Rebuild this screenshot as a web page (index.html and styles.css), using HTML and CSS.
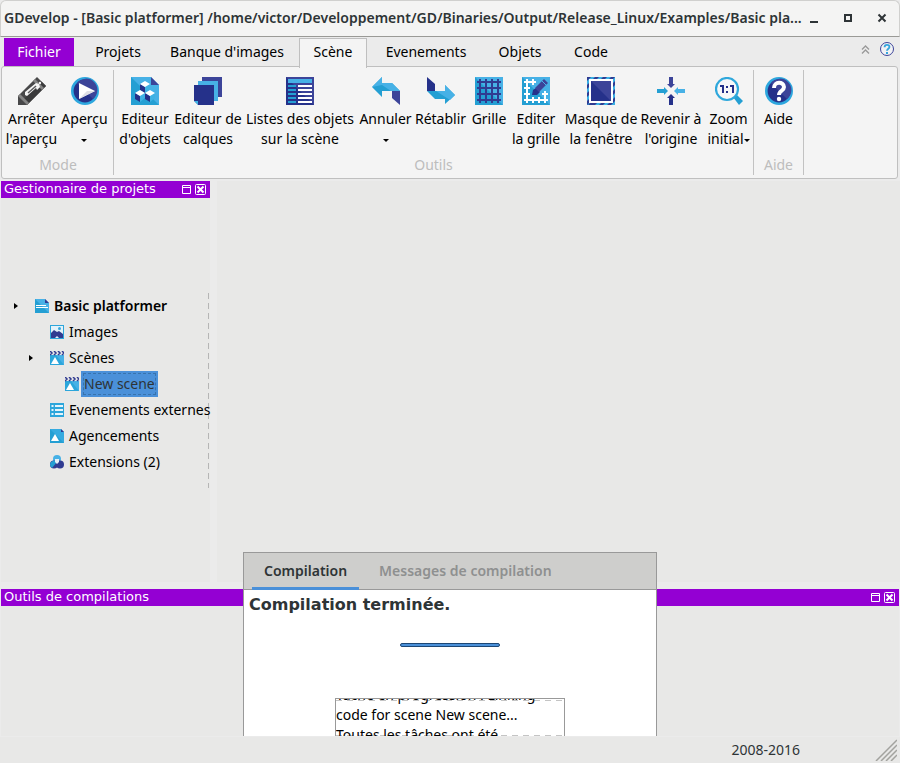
FILE: index.html
```html
<!DOCTYPE html>
<html lang="fr">
<head>
<meta charset="utf-8">
<title>GDevelop</title>
<link rel="stylesheet" href="styles.css">
</head>
<body>
<div class="window">
  <header class="titlebar">
    <h1 class="title">GDevelop - [Basic platformer] /home/victor/Developpement/GD/Binaries/Output/Release_Linux/Examples/Basic pla...</h1>
    <div class="window-buttons">
      <button type="button" aria-label="Réduire"><svg width="10" height="10" viewBox="0 0 10 10"><path d="M1 8h8v2H1z" fill="#2e3436"/></svg></button>
      <button type="button" aria-label="Agrandir"><svg width="10" height="10" viewBox="0 0 10 10"><path d="M2 2h6v6H2z" fill="none" stroke="#2e3436" stroke-width="2"/></svg></button>
      <button type="button" aria-label="Fermer"><svg width="10" height="10" viewBox="0 0 10 10"><path d="M1.500 1.500l7 7M8.500 1.500l-7 7" stroke="#2e3436" stroke-width="2"/></svg></button>
    </div>
  </header>

  <nav class="tabs">
    <button type="button" class="tab file">Fichier</button>
    <button type="button" class="tab projects">Projets</button>
    <button type="button" class="tab images">Banque d'images</button>
    <button type="button" class="tab scene">Scène</button>
    <button type="button" class="tab events">Evenements</button>
    <button type="button" class="tab objects">Objets</button>
    <button type="button" class="tab code">Code</button>
    <span class="tab-tools">
      <button type="button" aria-label="Replier"><svg width="9" height="9" viewBox="0 0 9 9"><path d="M1 4.500L4.500 1 8 4.500M1 8.500L4.500 5 8 8.500" fill="none" stroke="#999" stroke-width="1.300"/></svg></button>
      <button type="button" aria-label="Aide"><svg width="14" height="14" viewBox="0 0 14 14"><circle cx="7" cy="7" r="6.500" fill="#f2f2f4" stroke="#3c4499"/><path d="M4.600 5.200c0-3.200 4.800-3 4.800-.3C9.400 6.700 7 6.600 7 8.800" fill="none" stroke="#35a5dc" stroke-width="1.900"/><path d="M6 10h2v2H6z" fill="#35a5dc"/></svg></button>
    </span>
  </nav>

  <div class="ribbon">
    <section class="group mode">
      <div class="tools">
        <button type="button"><svg width="28" height="28" viewBox="0 0 28 28"><path d="M0 19L19 0l9 9L9 28H0z" fill="#484849"/><path d="M9 28L28 9l-4.500-4.500L4.500 23.500z" fill="#3a3a3b"/><path d="M0 19l2-2 9 9-2 2z" fill="#858585"/><path d="M15 4l2-2 9 9-2 2z" fill="#858585"/><path d="M7 18l0-3L18 6l3 1 1 3-3 3-1-2-9 8z" fill="#f4f4f4"/><path d="M10 16l8-7" stroke="#5a5a5b" stroke-width="1.500"/><circle cx="22" cy="6" r="1.200" fill="#f4f4f4"/></svg><span>Arrêter<br>l'aperçu</span></button>
        <button type="button"><svg width="28" height="28" viewBox="0 0 28 28"><circle cx="14" cy="14" r="12.700" fill="#25318a" stroke="#2da7de" stroke-width="2.600"/><path d="M6 6A11.400 11.400 0 1 1 22 22z" fill="#3c4499"/><path d="M8 6v16l16-8z" fill="#fff"/><path d="M8 22l16-8H16z" fill="#dedfe5"/></svg><span>Aperçu<br><i class="arrow"></i></span></button>
      </div>
      <h2>Mode</h2>
    </section>
    <section class="group outils">
      <div class="tools">
        <button type="button"><svg width="28" height="28" viewBox="0 0 28 28"><path d="M0 0h20l8 8v20H0z" fill="#47b1e6"/><path d="M0 0l28 28H0z" fill="#249fd3"/><path d="M20 0v8h8z" fill="#3c4499"/><path d="M9 7l5 3v6l-5-3zM4 16l5 3v6l-5-3zM14 16l5 3v6l-5-3z" fill="#25318a"/><path d="M14 10l5-3v6l-5 3zM9 19l5-3v5l-5 4zM19 19l5-3v5l-5 4z" fill="#3fb2e4"/><path d="M9 7l5-3 5 3-5 3zM4 16l5-3 5 3-5 3zM14 16l5-3 5 3-5 3z" fill="#fff"/></svg><span>Editeur<br>d'objets</span></button>
        <button type="button"><svg width="28" height="28" viewBox="0 0 28 28"><path d="M8 0h20v20H8z" fill="#3c4499"/><path d="M4 4h20v20H4z" fill="#47b1e6"/><path d="M0 8h20v20H4l-4-4z" fill="#25318a"/><path d="M0 24v4h4z" fill="#f4f4f4"/><path d="M0 24h4v4z" fill="#3fb2e4"/></svg><span>Editeur de<br>calques</span></button>
        <button type="button"><svg width="28" height="28" viewBox="0 0 28 28"><path d="M0 0h28v28H0z" fill="#3c4499"/><path d="M0 0l28 28H0z" fill="#25318a"/><path d="M2 2h24v4H2z" fill="#47b1e6"/><path d="M2 9h8M2 13h8M2 17h8M2 21h8M2 25h8" stroke="#249fd3" stroke-width="2"/><path d="M12 9h14M12 13h14M12 17h14M12 21h14M12 25h14" stroke="#fff" stroke-width="2"/></svg><span>Listes des objets<br>sur la scène</span></button>
        <button type="button"><svg width="28" height="28" viewBox="0 0 28 28"><path d="M0 10L10 0v6h10l8 8H10v6z" fill="#249fd3"/><path d="M0 10L10 0v6h10l8 8h-9l-9-6z" fill="#47b1e6"/><path d="M20 14h8v14l-8-7z" fill="#3c4499"/></svg><span>Annuler<br><i class="arrow"></i></span></button>
        <button type="button"><svg width="28" height="28" viewBox="0 0 28 28"><path d="M0 14h18V8l10 10-10 9v-5H8z" fill="#249fd3"/><path d="M9 14h9V8l10 10-5 5z" fill="#47b1e6"/><path d="M0 0l8 7v7H0z" fill="#25318a"/></svg><span>Rétablir</span></button>
        <button type="button"><svg width="28" height="28" viewBox="0 0 28 28"><path d="M0 0h28v28H0z" fill="#47b1e6"/><path d="M0 0l28 28H0z" fill="#249fd3"/><path d="M5 2v24M11 2v24M17 2v24M23 2v24M2 5h24M2 11h24M2 17h24M2 23h24" stroke="#303b91" stroke-width="2"/></svg><span>Grille</span></button>
        <button type="button"><svg width="28" height="28" viewBox="0 0 28 28"><path d="M0 0h28v28H0z" fill="#47b1e6"/><path d="M0 0l28 28H0z" fill="#249fd3"/><path d="M5 2v24M11 2v6M11 20v6M17 20v6M23 14v12M2 5h12M2 11h6M2 17h6M20 17h6M2 23h24" stroke="#fff" stroke-width="2"/><path d="M10 18l1-5 3-2 4 4-3 3z" fill="#25318a"/><path d="M13 11l9-9 4 4-9 9z" fill="#3c4499"/><path d="M20 4l4 4" stroke="#47b1e6"/></svg><span>Editer<br>la grille</span></button>
        <button type="button"><svg width="28" height="28" viewBox="0 0 28 28"><path d="M0 0h28v28H0z" fill="#303b91"/><path d="M0 4l4-4h4L0 8zM12 0h4l-3 3H9zM20 0h4l-3 3h-4zM28 0v4l-3 3V3zM28 8v4l-3 3v-4zM28 16v4l-3 3v-4zM28 24v4h-4zM0 12l3-3v4l-3 3zM0 20l3-3v4l-3 3zM0 28l3-3h1l-3 3zM8 28l3-3h4l-3 3zM16 28l3-3h4l-3 3z" fill="#39afe4"/><path d="M3 3h22v22H3z" fill="#25318a" stroke="#fff" stroke-width="2"/><path d="M4 4h20v20z" fill="#3c4499"/></svg><span>Masque de<br>la fenêtre</span></button>
        <button type="button"><svg width="28" height="28" viewBox="0 0 28 28"><path d="M12 0h4v7h2l-4 4-4-4h2z" fill="#3c4499"/><path d="M12 28h4v-7h2l-4-4-4 4h2z" fill="#25318a"/><path d="M0 12h7v-2l4 4-4 4v-2H0z" fill="#249fd3"/><path d="M28 12h-7v-2l-4 4 4 4v-2h7z" fill="#47b1e6"/></svg><span>Revenir à<br>l'origine</span></button>
        <button type="button"><svg width="28" height="28" viewBox="0 0 28 28"><path d="M18 20l3-3 7 7-4 4z" fill="#249fd3"/><circle cx="12" cy="12" r="11" fill="#f7f7f8" stroke="#2fa8dc" stroke-width="2.200"/><path d="M5 8h4v8H7v-6H5zM15 8h4v8h-2v-6h-2zM11 9h2v2h-2zM11 14h2v2h-2z" fill="#25318a"/></svg><span>Zoom<br>initial<i class="arrow"></i></span></button>
      </div>
      <h2>Outils</h2>
    </section>
    <section class="group aide">
      <div class="tools">
        <button type="button"><svg width="28" height="28" viewBox="0 0 28 28"><circle cx="14" cy="14" r="12.700" fill="#25318a" stroke="#2da7de" stroke-width="2.600"/><path d="M6 6A11.400 11.400 0 1 1 22 22z" fill="#3c4499"/><path d="M9 11c0-7 10-6.500 10-1 0 4-5 3.500-5 8" fill="none" stroke="#fff" stroke-width="4"/><circle cx="14" cy="22" r="2.200" fill="#fff"/></svg><span>Aide</span></button>
      </div>
      <h2>Aide</h2>
    </section>
  </div>

  <main class="workspace">
    <div class="upper">
      <aside class="dock">
        <div class="caption"><span>Gestionnaire de projets</span>
          <button type="button" aria-label="Agrandir"><svg width="9" height="9" viewBox="0 0 9 9"><path d="M.5.5h8v8h-8zM0 2.500h9" fill="none" stroke="#fff"/></svg></button>
          <button type="button" aria-label="Fermer"><svg width="11" height="11" viewBox="0 0 11 11"><rect x=".5" y=".5" width="10" height="10" rx="1" fill="none" stroke="#fff"/><path d="M2.500 2.500l6 6M8.500 2.500l-6 6" stroke="#fff" stroke-width="2"/></svg></button>
        </div>
        <div class="tree-area">
          <ul class="tree">
            <li class="root"><i class="expander"></i><svg width="14" height="14" viewBox="0 0 14 14"><path d="M0 0h10l4 4v10H0z" fill="#47b1e6"/><path d="M0 0l14 14H0z" fill="#249fd3"/><path d="M10 0v4h4z" fill="#303b91"/><path d="M1 6.500h10M1 8.500h12" stroke="#fff"/></svg><span>Basic platformer</span></li>
            <li class="child"><i class="blank"></i><svg width="14" height="14" viewBox="0 0 14 14"><path d="M0 0h14v14H0z" fill="#2ca6db"/><path d="M1 1h12v12H1z" fill="#e3f2fa"/><path d="M1 8l3-3 3 2 2-1 4 3v4H9L7 11l-2 2H1z" fill="#303b91"/><circle cx="9.500" cy="3.500" r="1.500" fill="#36a8dc"/></svg><span>Images</span></li>
            <li class="child"><i class="expander"></i><svg width="14" height="14" viewBox="0 0 14 14"><path d="M0 4h14v10H0z" fill="#2ca6db"/><path d="M6 4h8v10z" fill="#47b1e6"/><path d="M0 0l2 2-2 2M4 0l2 2-2 2M8 0l2 2-2 2M12 0l2 2-2 2" fill="none" stroke="#303b91" stroke-width="1.500"/><path d="M1 13l4-7 4 7z" fill="#fff"/></svg><span>Scènes</span></li>
            <li class="grandchild"><svg width="14" height="14" viewBox="0 0 14 14"><path d="M0 4h14v10H0z" fill="#2ca6db"/><path d="M6 4h8v10z" fill="#47b1e6"/><path d="M0 0l2 2-2 2M4 0l2 2-2 2M8 0l2 2-2 2M12 0l2 2-2 2" fill="none" stroke="#303b91" stroke-width="1.500"/><path d="M1 13l4-7 4 7z" fill="#fff"/></svg><span class="selected">New scene</span></li>
            <li class="child"><i class="blank"></i><svg width="14" height="14" viewBox="0 0 14 14"><path d="M0 0h14v14H0z" fill="#2ca6db"/><path d="M1.500 3h2M5 3h8M1.500 7h2M5 7h8M1.500 11h2M5 11h8" stroke="#e4f4fb" stroke-width="2"/></svg><span>Evenements externes</span></li>
            <li class="child"><i class="blank"></i><svg width="14" height="14" viewBox="0 0 14 14"><path d="M0 0h11l3 3v11H0z" fill="#36abe0"/><path d="M0 0l14 14H0z" fill="#249fd3"/><path d="M11 0v3h3z" fill="#303b91"/><path d="M1 12l4-7 4 7z" fill="#fff"/></svg><span>Agencements</span></li>
            <li class="child"><i class="blank"></i><svg width="14" height="14" viewBox="0 0 14 14"><circle cx="7" cy="4" r="4" fill="#47b1e6"/><circle cx="4" cy="9.500" r="4" fill="#303b91"/><path d="M0 9.500a4 4 0 0 1 7-2.500L2 13a4 4 0 0 1-2-3.500z" fill="#249fd3"/><circle cx="10" cy="9.500" r="4" fill="#303b91"/><path d="M5 4h4v3l-2 2-2-2z" fill="#e5eff7"/></svg><span>Extensions (2)</span></li>
          </ul>
        </div>
      </aside>
      <section class="canvas"></section>
    </div>
    <section class="lower">
      <div class="caption"><span>Outils de compilations</span>
        <button type="button" aria-label="Agrandir"><svg width="9" height="9" viewBox="0 0 9 9"><path d="M.5.5h8v8h-8zM0 2.500h9" fill="none" stroke="#fff"/></svg></button>
        <button type="button" aria-label="Fermer"><svg width="11" height="11" viewBox="0 0 11 11"><rect x=".5" y=".5" width="10" height="10" rx="1" fill="none" stroke="#fff"/><path d="M2.500 2.500l6 6M8.500 2.500l-6 6" stroke="#fff" stroke-width="2"/></svg></button>
      </div>
    </section>
    <section class="compiler">
      <div class="compiler-tabs">
        <button type="button" class="active">Compilation</button>
        <button type="button">Messages de compilation</button>
      </div>
      <div class="compiler-body">
        <h3>Compilation terminée.</h3>
        <div class="progress"></div>
        <div class="log"><p>Tâche en progression : Linking<br>code for scene New scene...<br>Toutes les tâches ont été</p></div>
      </div>
    </section>
  </main>

  <footer class="statusbar"><span>2008-2016</span>
    <svg class="grip" width="22" height="22" viewBox="0 0 22 22"><path d="M1 22L22 1M6 22L22 6M11 22L22 11M16 22l6-6" stroke="#a3a39f" stroke-width="1.500"/></svg>
  </footer>
</div>
</body>
</html>
```
FILE: styles.css
```css
* { box-sizing: border-box; }

body {
  margin: 0;
  background: #ebebeb;
  color: #000;
  font-family: "Noto Sans", sans-serif;
  font-size: 14px;
  line-height: 20px;
}

button {
  margin: 0;
  padding: 0;
  border: 0;
  background: none;
  color: inherit;
  font: inherit;
}

h1, h2, h3, p, ul { margin: 0; padding: 0; }
svg { display: block; flex: none; }

.window {
  display: flex;
  flex-direction: column;
  min-height: 100vh;
}

.titlebar {
  display: flex;
  align-items: center;
  height: 37px;
  padding: 0 12px 2px 3px;
  border: 1px solid #d0d0ce;
  border-bottom-color: #9a9a96;
  border-radius: 6px 6px 0 0;
  background: #f4f4f3;
}

.title {
  flex: 1;
  min-width: 0;
  overflow: hidden;
  color: #2e3436;
  font-size: 14px;
  font-weight: 600;
  text-overflow: ellipsis;
  white-space: nowrap;
}

.window-buttons { display: flex; gap: 24px; padding-left: 4px; }

.tabs {
  display: flex;
  height: 29px;
  padding-left: 4px;
}

.tab { height: 29px; white-space: nowrap; }
.file { width: 70px; height: 28px; margin-top: 1px; background: #9400d3; color: #fff; }
.projects { width: 88px; }
.images { width: 130px; margin-right: 7px; }
.scene {
  position: relative;
  width: 68px;
  height: 30px;
  margin-top: 1px;
  padding-bottom: 4px;
  border: 1px solid #bfbfbf;
  border-bottom: 0;
  background: #f4f4f4;
}
.events { width: 118px; }
.objects { width: 70px; }
.code { width: 72px; }
.tab-tools { display: flex; flex: 1; align-items: center; justify-content: flex-end; gap: 10px; padding: 0 6px 5px 0; }

.ribbon {
  display: flex;
  margin: 0 2px 2px 1px;
  padding: 3px 0 3px 1px;
  border: 1px solid #bfbfbf;
  border-radius: 3px;
  background: #f4f4f4;
}

.group { border-right: 1px solid #c2c2c2; }
.tools { display: grid; height: 85px; }
.mode .tools { grid-template-columns: 57px 49px; margin-right: 4px; }
.outils .tools { grid-template-columns: 62px 64px 120px 51px 59px 38px 56px 74px 66px 49px; }
.aide .tools { grid-template-columns: 49px; }

.tools button {
  display: flex;
  flex-direction: column;
  align-items: center;
  min-width: 0;
  padding-top: 7px;
  white-space: nowrap;
}
.tools button svg { margin-bottom: 4px; }

.arrow {
  display: inline-block;
  border: 3px solid transparent;
  border-top-color: #000;
  border-bottom: 0;
  vertical-align: middle;
}

.group h2 {
  color: #bdbdbd;
  font-size: 14px;
  font-weight: 400;
  text-align: center;
}

.workspace {
  position: relative;
  display: flex;
  flex: 1;
  flex-direction: column;
}

.upper { display: flex; flex: 1; }
.dock { display: flex; flex-direction: column; width: 210px; padding-left: 1px; }
.canvas { flex: 1; margin-left: 7px; background: #e8e8e7; }
.lower { height: 148px; margin-top: 7px; padding: 0 1px; }
.lower::after { display: block; height: 130px; background: #e8e8e7; content: ""; }

.caption {
  display: flex;
  align-items: center;
  gap: 4px;
  height: 17px;
  padding: 0 4px 0 3px;
  background: #9400d3;
  color: #fff;
  font-family: "DejaVu Sans", sans-serif;
  font-size: 13px;
  line-height: 16px;
}
.caption span { flex: 1; height: 17px; white-space: nowrap; }

.tree-area {
  display: flex;
  flex: 1;
  flex-direction: column;
  justify-content: center;
  background: #e8e8e7;
}

.tree {
  height: 195px;
  margin-right: 1px;
  background: repeating-linear-gradient(#b5b5b5 0 6px, transparent 6px 10px) right / 1px 100% no-repeat;
  list-style: none;
}
.tree li {
  display: flex;
  align-items: center;
  height: 26px;
  white-space: nowrap;
}
.tree span { padding-left: 5px; }
.root { padding-left: 13px; font-weight: 600; }
.child { padding-left: 28px; }
.grandchild { padding-left: 64px; }
.blank { flex: none; width: 21px; }
.expander {
  flex: none;
  width: 4px;
  height: 6px;
  margin-right: 17px;
  border: 3px solid transparent;
  border-left: 4px solid #000;
  border-right: 0;
}
.tree .selected {
  margin-left: 2px;
  padding: 2px;
  border: 1px solid #4a90d9;
  outline: 1px dashed #3873ad;
  outline-offset: -3px;
  background: #4a90d9;
  color: #2e3436;
}

.compiler {
  position: absolute;
  bottom: 1px;
  left: 50%;
  display: flex;
  flex-direction: column;
  width: 414px;
  height: 184px;
  border: 1px solid #999;
  border-bottom: 0;
  background: #fff;
  transform: translateX(-50%);
}
.compiler-tabs {
  display: flex;
  gap: 8px;
  height: 37px;
  padding-left: 8px;
  border-bottom: 1px solid #999;
  background: #cececc;
}
.compiler-tabs button { height: 37px; padding: 0 12px 2px; color: #8e9090; font-weight: 600; }
.compiler-tabs .active { border-bottom: 3px solid #4a90d9; padding: 1px 12px 0; color: #2e3436; }

.compiler-body {
  display: flex;
  flex: 1;
  flex-direction: column;
  align-items: center;
  min-height: 0;
}
.compiler-body h3 {
  align-self: flex-start;
  padding: 5px 0 0 5px;
  color: #2e3436;
  font: bold 16px/20px "DejaVu Sans", sans-serif;
}
.progress {
  flex: none;
  width: 100px;
  height: 4px;
  margin-top: 28px;
  border: 1px solid #1c4776;
  border-radius: 2px;
  background: #4a90d9;
}
.log {
  flex: 1;
  width: 230px;
  min-height: 0;
  margin-top: 51px;
  border: 1px solid #999;
  border-bottom: 0;
  background:
    repeating-linear-gradient(90deg, #c4c4c4 0 6px, transparent 6px 11px) 0 1px / 100% 1px no-repeat,
    repeating-linear-gradient(90deg, #c4c4c4 0 6px, transparent 6px 11px) 0 100% / 100% 1px no-repeat;
  overflow: hidden;
}
.log p { margin-top: -14px; white-space: nowrap; }

.statusbar {
  display: flex;
  align-items: center;
  justify-content: flex-end;
  height: 26px;
  padding-right: 3px;
  background: #e8e8e7;
  color: #2e3436;
}
.statusbar span { margin-right: 75px; }
```
